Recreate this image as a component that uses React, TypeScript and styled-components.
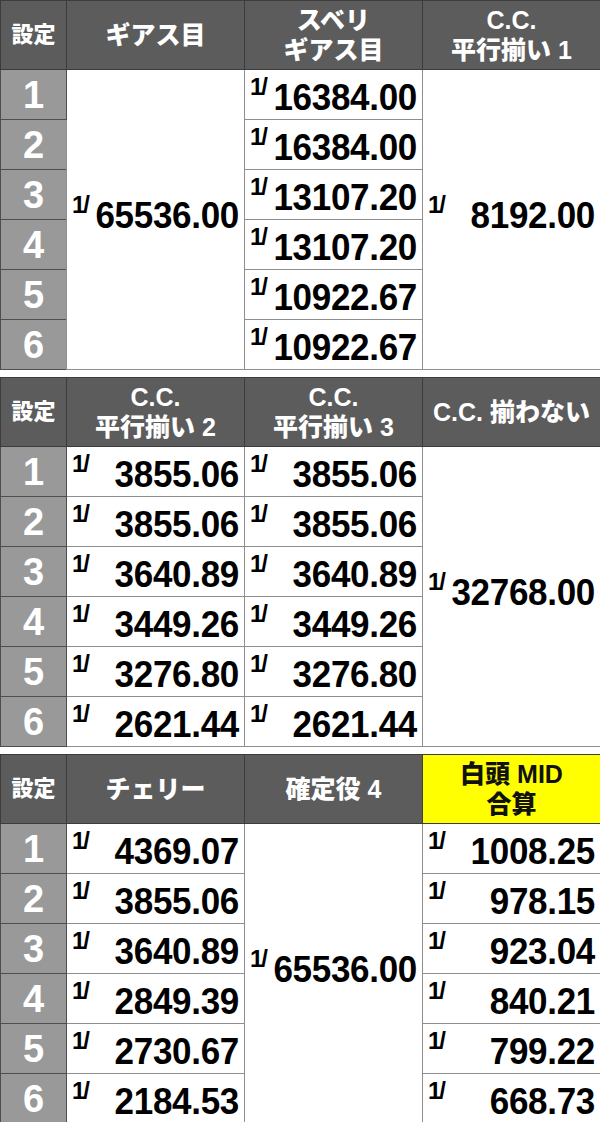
import React, { FC } from 'react'
import styled, { createGlobalStyle } from 'styled-components'

type Column =
  | { kind: 'span'; value: string }
  | { kind: 'rows'; values: string[] }

interface TableData {
  heads: { lines: string[]; yellow?: boolean }[]
  cols: Column[]
}

const TABLES: TableData[] = [
  {
    heads: [
      { lines: ['ギアス目'] },
      { lines: ['スベリ', 'ギアス目'] },
      { lines: ['C.C.', '平行揃い 1'] },
    ],
    cols: [
      { kind: 'span', value: '65536.00' },
      {
        kind: 'rows',
        values: ['16384.00', '16384.00', '13107.20', '13107.20', '10922.67', '10922.67'],
      },
      { kind: 'span', value: '8192.00' },
    ],
  },
  {
    heads: [
      { lines: ['C.C.', '平行揃い 2'] },
      { lines: ['C.C.', '平行揃い 3'] },
      { lines: ['C.C. 揃わない'] },
    ],
    cols: [
      {
        kind: 'rows',
        values: ['3855.06', '3855.06', '3640.89', '3449.26', '3276.80', '2621.44'],
      },
      {
        kind: 'rows',
        values: ['3855.06', '3855.06', '3640.89', '3449.26', '3276.80', '2621.44'],
      },
      { kind: 'span', value: '32768.00' },
    ],
  },
  {
    heads: [
      { lines: ['チェリー'] },
      { lines: ['確定役 4'] },
      { lines: ['白頭 MID', '合算'], yellow: true },
    ],
    cols: [
      {
        kind: 'rows',
        values: ['4369.07', '3855.06', '3640.89', '2849.39', '2730.67', '2184.53'],
      },
      { kind: 'span', value: '65536.00' },
      {
        kind: 'rows',
        values: ['1008.25', '978.15', '923.04', '840.21', '799.22', '668.73'],
      },
    ],
  },
]

const SETTINGS = ['1', '2', '3', '4', '5', '6']

const Value: FC<{ value: string }> = ({ value }) => (
  <ValueBox>
    <Frac>1/</Frac>
    <Num>{value}</Num>
  </ValueBox>
)

const ProbTable: FC<{ data: TableData }> = ({ data }) => (
  <Table>
    <colgroup>
      <col style={{ width: 66 }} />
      <col style={{ width: 178 }} />
      <col style={{ width: 178 }} />
      <col style={{ width: 178 }} />
    </colgroup>
    <thead>
      <tr>
        <HeadCell>設定</HeadCell>
        {data.heads.map((h, i) => (
          <HeadCell key={i} yellow={h.yellow}>
            {h.lines.map((l, j) => (
              <div key={j}>{l}</div>
            ))}
          </HeadCell>
        ))}
      </tr>
    </thead>
    <tbody>
      {SETTINGS.map((s, r) => (
        <Row key={s}>
          <SettingCell>{s}</SettingCell>
          {data.cols.map((c, i) => {
            if (c.kind === 'span') {
              return r === 0 ? (
                <SpanCell key={i} rowSpan={6}>
                  <Value value={c.value} />
                </SpanCell>
              ) : null
            }
            return (
              <RowCell key={i}>
                <Value value={c.values[r]} />
              </RowCell>
            )
          })}
        </Row>
      ))}
    </tbody>
  </Table>
)

const App: FC = () => (
  <>
    <GlobalStyle />
    <Page>
      {TABLES.map((t, i) => (
        <ProbTable key={i} data={t} />
      ))}
    </Page>
  </>
)

export default App

const GlobalStyle = createGlobalStyle`
  html, body {
    margin: 0;
    padding: 0;
    background: #ffffff;
  }
  body {
    font-family: "Liberation Sans", "Noto Sans CJK JP", sans-serif;
  }
`

const Page = styled.div`
  width: 600px;
  display: flex;
  flex-direction: column;
  gap: 7px;
`

const Table = styled.table`
  width: 600px;
  table-layout: fixed;
  border-collapse: collapse;
  border: 1px solid #4a4a4a;
`

const HeadCell = styled.th<{ yellow?: boolean }>`
  height: 68px;
  padding: 0;
  background: ${(p) => (p.yellow ? '#ffff00' : '#5c5c5c')};
  color: ${(p) => (p.yellow ? '#111111' : '#ffffff')};
  border: 1px solid #3c3c3c;
  font-family: "Liberation Sans", "Noto Sans CJK JP", sans-serif;
  font-weight: 900;
  font-size: 25px;
  line-height: 30px;
  text-align: center;
  vertical-align: middle;
  white-space: nowrap;
  &:first-child {
    font-size: 22px;
  }
`

const Row = styled.tr`
  height: 50px;
`

const SettingCell = styled.td`
  padding: 0;
  background: #999999;
  color: #ffffff;
  border: 1px solid #4e4e4e;
  font-weight: 700;
  font-size: 38px;
  line-height: 40px;
  text-align: center;
  vertical-align: middle;
`

const RowCell = styled.td`
  padding: 4px 5px 0 5px;
  background: #ffffff;
  border: 1px solid #8e8e8e;
  vertical-align: middle;
`

const SpanCell = styled(RowCell)`
  padding: 0 5px 10px 5px;
`

const ValueBox = styled.div`
  display: flex;
  align-items: flex-start;
  justify-content: space-between;
  color: #000000;
  font-weight: 700;
`

const Frac = styled.span`
  font-size: 24px;
  line-height: 20px;
  letter-spacing: -2px;
`

const Num = styled.span`
  display: inline-block;
  font-size: 35px;
  line-height: 40px;
  letter-spacing: -0.3px;
  transform: scaleY(1.06);
`
